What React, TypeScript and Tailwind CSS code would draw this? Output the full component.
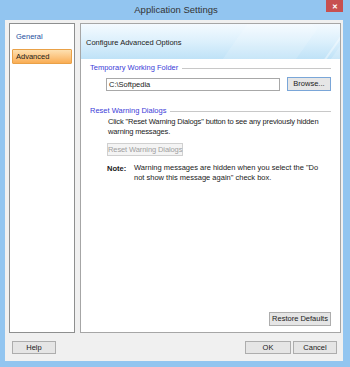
export default function App() {
  const font = { fontFamily: '"Liberation Sans", Arial, sans-serif' };
  return (
    <div className="w-[350px] h-[367px] bg-[#92c5f0] flex flex-col overflow-hidden" style={font}>
      {/* title bar */}
      <div className="h-[20px] flex items-start relative">
        <div className="flex-1 text-center text-[9.5px] leading-[20px] text-[#333] pl-[2px]">
          Application Settings
        </div>
        <div className="absolute right-[7px] top-0 w-[17px] h-[12px] bg-[#c75050] flex items-center justify-center text-white text-[7px] font-bold leading-none">
          ✕
        </div>
      </div>
      <div className="ml-[5px] mr-[7px] h-[341px] bg-[#f0f0f0] flex flex-col pt-[3px] pl-[4px] pr-[2px]">
        <div className="flex gap-[5px] h-[310px]">
          {/* nav */}
          <div className="w-[68px] bg-white border border-[#8e8f8f] flex flex-col px-[2px] pt-[6px] text-[7.5px]">
            <div className="px-[4px] h-[14px] leading-[14px] text-[#1e4e9e]">General</div>
            <div className="mt-[5px] h-[15px] leading-[13px] px-[3px] text-[#1a1a1a] border border-[#e9a148] bg-gradient-to-b from-[#fde0b0] to-[#f9ad52] rounded-[1px]">
              Advanced
            </div>
          </div>
          {/* content */}
          <div className="flex-1 bg-white border border-[#a6a6a6] flex flex-col text-[7.5px] text-[#1a1a1a]">
            <div className="h-[35px] relative overflow-hidden bg-gradient-to-b from-[#f4faff] via-[#dcf0fc] to-[#bfe2f7] flex items-center px-[5px]">
              <div className="absolute right-[40px] top-[-20px] w-[60px] h-[80px] rotate-[35deg] bg-white/15" />
              <div className="absolute right-[10px] top-[-10px] w-[2px] h-[80px] rotate-[35deg] bg-white/40" />
              <div className="absolute right-[-10px] top-[-10px] w-[14px] h-[80px] rotate-[35deg] bg-white/20" />
              <span className="relative pt-[2px]">Configure Advanced Options</span>
            </div>
            <div className="px-[9px] pt-[2px] flex flex-col">
              <div className="flex items-center gap-[4px] h-[14px]">
                <span className="text-[#3c3cd8]">Temporary Working Folder</span>
                <div className="flex-1 h-px bg-[#c8c8c8]" />
              </div>
              <div className="flex items-center mt-[2px] pl-[16px] gap-[7px]">
                <div className="w-[174px] h-[13px] border border-[#a8a8a8] leading-[11px] px-[2px]">C:\Softpedia</div>
                <div className="w-[44px] h-[14px] border border-[#7aa6d8] bg-[#e6e6e6] leading-[12px] text-center">Browse...</div>
              </div>
              <div className="flex items-center gap-[4px] h-[12px] mt-[14px]">
                <span className="text-[#3c3cd8]">Reset Warning Dialogs</span>
                <div className="flex-1 h-px bg-[#c8c8c8]" />
              </div>
              <div className="pl-[18px] leading-[10px] tracking-[-0.15px]">
                Click "Reset Warning Dialogs" button to see any previously hidden warning messages.
              </div>
              <div className="ml-[17px] mt-[6px] w-[76px] h-[13px] border border-[#d0d0d0] bg-[#f4f4f4] text-[#a0a0a0] leading-[11px] text-center whitespace-nowrap tracking-[-0.1px]">
                Reset Warning Dialogs
              </div>
              <div className="flex pl-[17px] mt-[7px] pr-[10px]">
                <span className="w-[27px] font-bold">Note:</span>
                <span className="flex-1 leading-[10px]">Warning messages are hidden when you select the "Do not show this message again" check box.</span>
              </div>
            </div>
            <div className="flex-1" />
            <div className="flex justify-end pr-[9px] pb-[6px]">
              <div className="w-[62px] h-[14px] border border-[#adadad] bg-[#e5e5e5] leading-[12px] text-center">Restore Defaults</div>
            </div>
          </div>
        </div>
        <div className="flex items-center mt-[8px] text-[7.5px] text-[#1a1a1a] pl-[3px] pr-[4px]">
          <div className="w-[44px] h-[13px] border border-[#adadad] bg-[#e5e5e5] leading-[11px] text-center">Help</div>
          <div className="flex-1" />
          <div className="w-[46px] h-[13px] border border-[#adadad] bg-[#e5e5e5] leading-[11px] text-center">OK</div>
          <div className="w-[44px] h-[13px] ml-[2px] border border-[#adadad] bg-[#e5e5e5] leading-[11px] text-center">Cancel</div>
        </div>
      </div>
    </div>
  );
}
